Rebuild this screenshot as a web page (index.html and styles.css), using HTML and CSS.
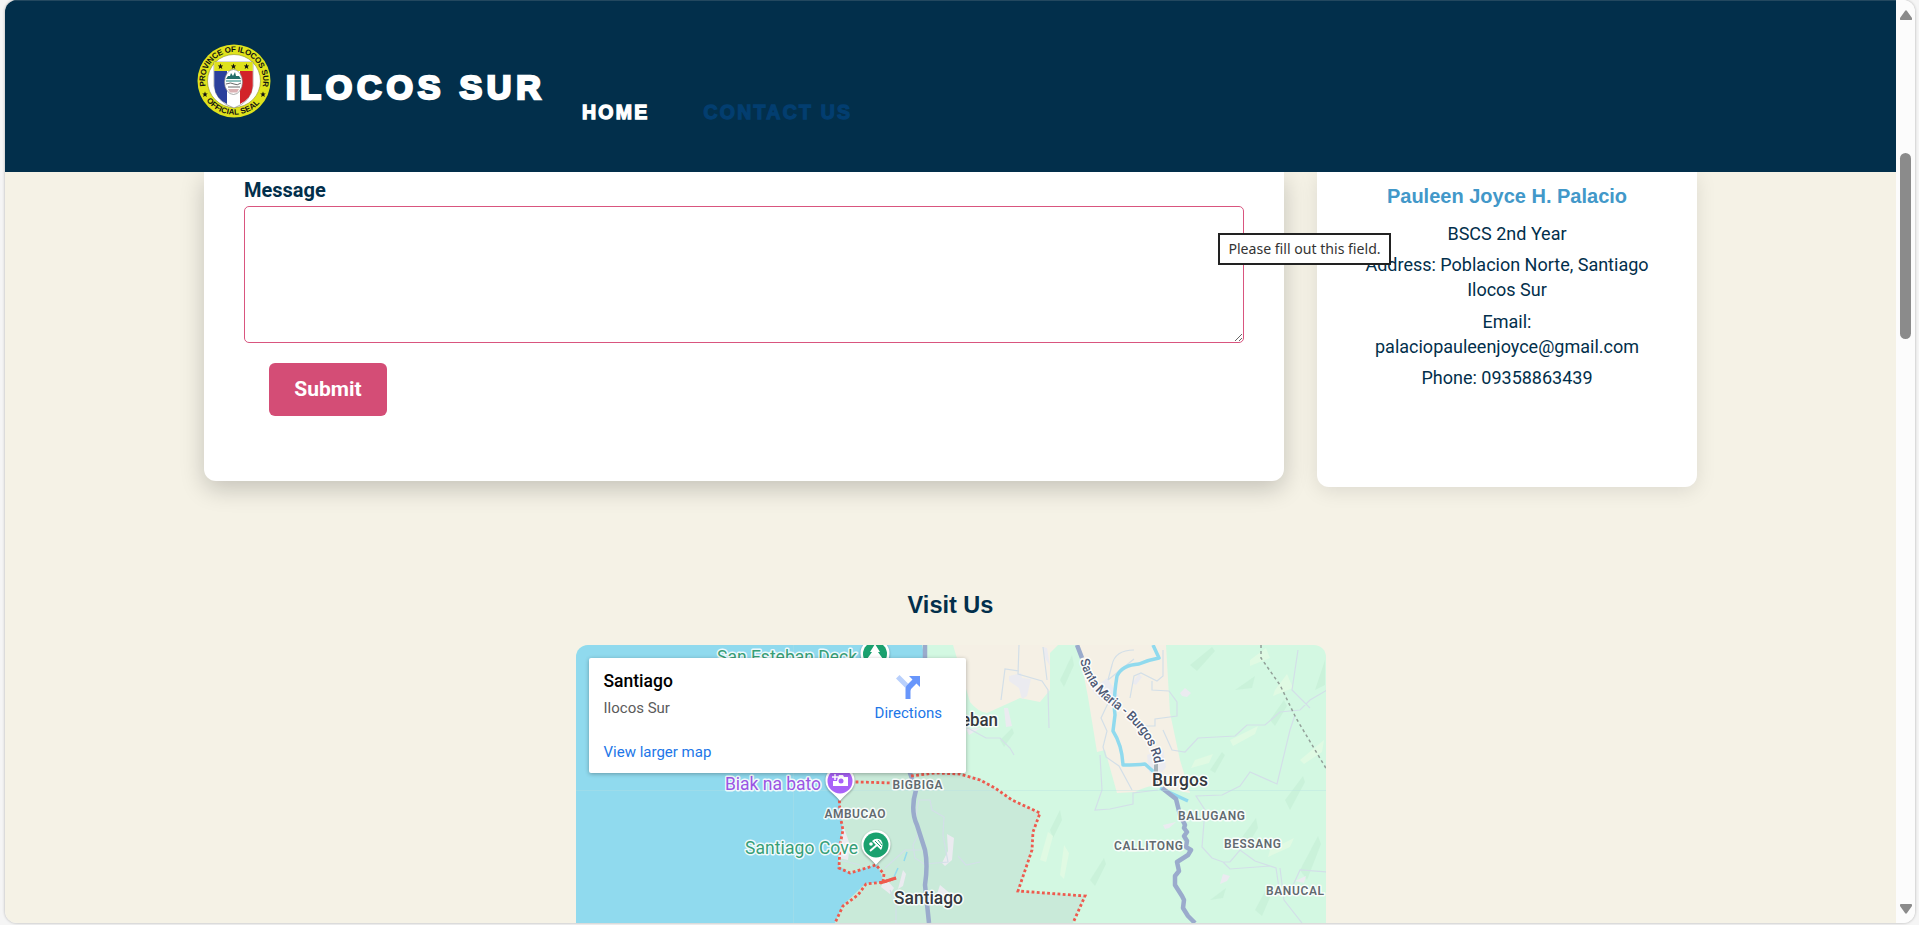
FILE: index.html
```
<!DOCTYPE html>
<html lang="en">
<head>
<meta charset="utf-8">
<title>Contact Us - Ilocos Sur</title>
<link rel="stylesheet" href="styles.css">
</head>
<body>
<div class="window">
  <div class="page">
    <header class="site-header">
      <svg class="seal" viewBox="0 0 74 74">
        <defs>
          <path id="ring-top" d="M10.200 48 A29 29 0 1 1 63.800 48"/>
          <path id="ring-bottom" d="M5.5 49.5 A34 34 0 0 0 68.5 49.5"/>
        </defs>
        <circle cx="37" cy="37" r="36.5" fill="#dfe21c"/>
        <circle cx="37" cy="37" r="26.500" fill="#fff" stroke="#8d9020" stroke-width=".6"/>
        <path d="M17 18H56V42Q54 58 37 64Q19 58 17 42Z" fill="#fff" stroke="#777" stroke-width=".6"/>
        <path d="M17.300 27H30V60Q18 54 17.300 42Z" fill="#2b409c"/>
        <path d="M43 27H55.700V42Q55 54 43 60Z" fill="#d2232a"/>
        <path d="M17.300 18H55.700V27H17.300Z" fill="#dfe21c"/>
        <ellipse cx="36.500" cy="38" rx="9" ry="12.500" fill="#fff" stroke="#888" stroke-width=".7"/>
        <path d="M29 35L31 32H33L34 29L36 32L38 28L39 32H42L44 35Z" fill="#226d6a"/>
        <path d="M29 36H44V38H29Z" fill="#8cc0bd"/>
        <path d="M29 40Q34 38 37 40T44 39M31 43H43" fill="none" stroke="#444" stroke-width=".8"/>
        <path d="M31 45H42L40 48.500H33Z" fill="#dbb1b4"/>
        <g fill="#111"><path id="star" d="M23.500 19.500l.8 2h2l-1.600 1.300.6 2.200-1.800-1.300-1.800 1.300.6-2.200-1.600-1.300h2z"/><use href="#star" x="13"/><use href="#star" x="26"/><use href="#star" x="-15.500" y="28"/><use href="#star" x="42.500" y="28"/></g>
        <text class="seal-text"><textPath href="#ring-top" startOffset="6" textLength="102">PROVINCE OF ILOCOS SUR</textPath></text>
        <text class="seal-text"><textPath href="#ring-bottom" startOffset="8" textLength="61">OFFICIAL SEAL</textPath></text>
      </svg>
      <span class="brand">ILOCOS SUR</span>
      <nav class="nav">
        <a class="nav-link">HOME</a>
        <a class="nav-link nav-link-current">CONTACT US</a>
      </nav>
    </header>
    <main class="main">
      <section class="cards">
        <form class="form-card">
          <label class="form-label" for="message">Message</label>
          <textarea class="message" id="message"></textarea>
          <button class="submit" type="button">Submit</button>
        </form>
        <aside class="person-card">
          <h3 class="person-name">Pauleen Joyce H. Palacio</h3>
          <p class="person-line">BSCS 2nd Year</p>
          <p class="person-line">Address: Poblacion Norte, Santiago Ilocos Sur</p>
          <p class="person-line">Email: palaciopauleenjoyce@gmail.com</p>
          <p class="person-line">Phone: 09358863439</p>
        </aside>
      </section>
      <h2 class="visit-title">Visit Us</h2>
      <div class="map">
        <svg class="map-canvas" viewBox="576 645 751 278">
          <rect x="576" y="645" width="751" height="278" fill="#d3f8e2"/>
          <g fill="#c4efd5" opacity=".6">
            <path d="M1060 680l12-25 2 10-10 22zM1190 665l22-18 3 4-18 20zM1235 690l20-14-3 12zM1270 720l14-20 3 6-12 20zM1210 770l12-18 3 3-10 18zM1285 800l18-24 2 6-15 28zM1240 840l16-22 2 10-12 20zM1300 870l18-34 3 8-14 36zM1050 830l10-20 2 10-9 18zM1090 880l14-22 2 6-11 22zM1210 900l16-12-3 10zM1255 910l14-26 5 4-12 28zM1000 740l12-12 2 5-10 14zM1315 690l10-30v25z"/>
          </g>
          <g fill="#e0fae3">
            <path d="M1250 660l16-12 4 10-20 8zM1275 690l12-16 6 14-20 8zM1195 760l18-6-4 9-18 5zM1230 740l28-14-3 8-22 12zM1040 860l8-28 5 4-7 26zM1060 875l4-30 5 8-5 26zM1270 850l24-12-4 9-22 10zM1300 760l24-20-2 12-18 12z"/>
          </g>
          <path d="M953 645L970 702Q978 712 987 713L1020 698L1040 702L1050 690V653L1058 645Z" fill="#f5f0e5"/>
          <path d="M1078 645L1088 697L1097 752L1105 750L1117 793L1135 792Q1150 784 1157 787L1190 793L1180 760L1170 713L1166 645Z" fill="#f5f0e5"/>
          <path d="M576 645H922L929 680L945 760L850 773L840 800L843 830L838 850L839 866L850 873L877 864L884 875L884 882L865 884L855 895L843 905L835 923H576Z" fill="#90daee"/>
          <path class="town" d="M850 773L960 773L980 778L1012 800L1040 813L1033 832L1032 850L1018 891L1085 896L1073 923H835L843 905L865 884L884 882L877 864L850 873L839 866L843 830L840 800Z" fill="#c9ead9"/>
          <g fill="#ebebf0">
            <path d="M843 825l7 20-2 15-9-2zM1009 676l12-3 1 5 9 1-4 17-5 3-3-11-10-7zM1004 708h4l4 18-6 1zM966 729l15-1-12 7zM1132 683l7-9 3 3-6 8zM1180 693l5-5 6 5-4 4-5-1zM1163 825l13-3-7 6-4 1zM1220 884l3-10 7 2-3 5zM1295 881l11-5-2 7zM947 834l7 4-2 22-7 6-3-3 6-12zM903 870l3 4-3 12-5 3zM940 885l12 10-3 9-12-10zM885 878l9 10-4 6-9-7zM1043 647l4 1 3 18-5-8zM1092 690l15-12 12 18-12 6-7-3zM1147 755l16-6 3 18-9 12-8-7z"/>
          </g>
          <g class="minor-roads">
            <path d="M1019 645L1018 674L1042 681L1048 690L1049 728M1001 700L1005 669L1019 671M1043 647L1047 680M966 727L986 738L1000 738L1010 748L1014 755M1110 699L1101 718L1107 731L1103 747L1106 757L1119 766L1132 790M1134 659L1108 680M1134 650Q1115 650 1112 665L1108 680M1130 698L1134 676L1141 673L1157 681L1163 676V650M1152 681V690L1169 691L1177 702V716L1155 719V726H1141M1163 730L1172 750L1185 752L1198 738L1235 736L1247 725H1265L1280 712L1300 710L1310 700L1327 690M1295 715L1290 730L1277 784L1250 772L1240 786L1222 795L1196 796L1205 810L1202 847L1212 858L1223 862H1230L1240 850L1255 861L1276 868L1280 895M1223 862L1230 869L1270 866M1327 872L1300 870L1290 892M1100 755L1102 790L1095 810L1110 809L1133 804V793L1158 790M1280 868L1284 900L1302 923M1298 650L1292 690L1310 708"/>
            <path d="M919 800H930L932 810L944 817L943 835L948 862L924 864L915 858L913 845L918 835L915 820ZM922 850L905 850L885 868M890 890L896 905V923M958 856L966 865L980 862M840 860L860 865"/>
          </g>
          <path class="district" d="M1261 645V658L1280 685L1296 718L1327 770"/>
          <path class="river" d="M1153 645L1159 658Q1148 660 1139 664Q1122 665 1117 676Q1113 700 1115 715L1113 731Q1122 745 1123 765Q1137 765 1145 764L1155 773M1160 788L1188 801"/>
          <path d="M907 852l-3 9M898 868l-4 9" stroke="#90daee" stroke-width="1.500"/>
          <path class="highway" d="M925 645V665L910 773L916 790Q910 810 917 825L925 850Q928 865 925 885L929 923M1077 645L1082 658M1162 788L1176 799L1180 815L1185 825L1184 828L1187 832L1184 836L1187 841L1186 847L1191 850L1188 855L1177 862L1179 871L1175 876V885L1182 896L1184 900L1183 908L1188 916L1195 923"/>
          <path d="M1156 764V785" stroke="#a7b2b9" stroke-width="4" fill="none"/>
          <path d="M576 790.500H1327M793.500 645V923" stroke="#b6dfe2" stroke-width=".6" opacity=".6"/>
          <path class="boundary" d="M839 790L840 815L843 830L840 845L839 868L850 873L876 865L884 874L883 882L896 878L884 882L866 884L858 895L843 906L835 923M840 782H860L892 783M911 776L935 773L960 774L980 780L995 788L1012 800L1040 813L1033 832L1032 850L1018 891L1085 896L1073 923"/>
          <path d="M880 883L896 878" stroke="#ee5a4e" stroke-width="3"/>
          <g class="poi-label">
            <text x="717" y="662.500" textLength="140" fill="#379f77">San Esteban Deck</text>
            <text x="725" y="789.500" textLength="96" fill="#9b55e3">Biak na bato</text>
            <text x="745" y="854" textLength="113" fill="#379f77">Santiago Cove</text>
          </g>
          <g class="pins">
            <g transform="translate(875 654)"><path class="pin-base" d="M0 20Q-3 16-10 10A14.500 14.500 0 1 1 10 10Q3 16 0 20Z"/><circle r="12" fill="#1aa16f"/><path d="M0-10L-5-2H-3L-8 5H8L3-2H5Z" fill="#fff"/></g>
            <g transform="translate(840 781)"><path class="pin-base" d="M0 20Q-3 16-10 10A14.500 14.500 0 1 1 10 10Q3 16 0 20Z"/><circle r="12.500" fill="#a962f8"/><path d="M-2-4L-1-6H3L4-4H8V5H-7V0H-3Z" fill="#fff"/><circle cx="1" r="2.500" fill="#a962f8"/><path d="M-5-7v6M-8-4h6" stroke="#fff" stroke-width="1.500" fill="none"/></g>
            <g transform="translate(876 845)"><path class="pin-base" d="M0 20Q-3 16-10 10A14.500 14.500 0 1 1 10 10Q3 16 0 20Z"/><circle r="12.500" fill="#1aa16f"/><path d="M-4-4Q0-8 5-5Q8 0 5 5Z" fill="#fff"/><path d="M-1-4L5 2M2-5L6 0" fill="none" stroke="#1aa16f" stroke-width="1"/><path d="M1 0L-6 6" stroke="#fff" stroke-width="2"/><circle cx="-5" cy="-1" r="1.800" fill="#fff"/></g>
          </g>
          <g class="city-label">
            <text x="937" y="726" textLength="61" lengthAdjust="spacingAndGlyphs">Esteban</text>
            <text x="894" y="904" textLength="69">Santiago</text>
            <text x="1152" y="786" textLength="56">Burgos</text>
          </g>
          <g class="village-label">
            <text x="892.500" y="788.500" textLength="51">BIGBIGA</text>
            <text x="824.500" y="818" textLength="62">AMBUCAO</text>
            <text x="1178" y="820" textLength="68">BALUGANG</text>
            <text x="1114" y="849.500" textLength="70">CALLITONG</text>
            <text x="1224" y="847.500" textLength="58">BESSANG</text>
            <text x="1266" y="895" textLength="59">BANUCAL</text>
          </g>
          <path id="road-line" d="M1080 660C1086 684 1098 696 1118 710C1136 725 1152 741 1155 768" fill="none"/>
          <text class="road-label"><textPath href="#road-line" textLength="131">Santa Maria - Burgos Rd</textPath></text>
        </svg>
        <div class="place-card">
          <div class="place-info">
            <div class="place-name">Santiago</div>
            <div class="place-region">Ilocos Sur</div>
            <a class="place-link">View larger map</a>
          </div>
          <div class="place-directions">
            <svg class="directions-icon" viewBox="0 0 24 24"><path d="M0 3.500L3.500 0L12 8.500L9.500 13Z" fill="#b9d0fc"/><path d="M9.500 24V13.500Q9.500 11.500 11 10L16.500 4.500L13 1H24V12L20.500 8.500L15.500 13.500Q14.500 14.500 14.500 16V24Z" fill="#6896fb"/></svg>
            <a class="directions-link">Directions</a>
          </div>
        </div>
      </div>
    </main>
  </div>
  <div class="scrollbar">
    <svg class="arrow" viewBox="0 0 12 10"><path d="M5 1Q6-.5 7 1L12 8Q12.500 10 11 10H1Q-.5 10 0 8Z" fill="#8b8b8b"/></svg>
    <div class="thumb"></div>
    <svg class="arrow arrow-down" viewBox="0 0 12 10"><path d="M5 9Q6 10.500 7 9L12 2Q12.500 0 11 0H1Q-.5 0 0 2Z" fill="#8b8b8b"/></svg>
  </div>
  <div class="tooltip">Please fill out this field.</div>
</div>
</body>
</html>
```
FILE: styles.css
```
* { box-sizing: border-box; }
body {
  margin: 0;
  height: 925px;
  padding: 0 4px 2px 5px;
  background: #f5f5f5;
  font-family: Roboto, "Liberation Sans", sans-serif;
  color: #022f4b;
  overflow: hidden;
}
.window {
  position: relative;
  display: flex;
  height: 923px;
  border-radius: 12px;
  overflow: hidden;
  box-shadow: 0 0 3px rgba(0, 0, 0, .3);
  background: #fcfcfc;
}
.page {
  width: 1891px;
  height: 923px;
  background: #f5f2e6;
  overflow: hidden;
}
.site-header {
  position: relative;
  z-index: 2;
  display: flex;
  align-items: flex-start;
  height: 172px;
  padding: 43px 0 0 192px;
  background: #022f4b;
  border-top: 1px solid #23485f;
  color: #fff;
  font-family: "Liberation Sans", Arial, sans-serif;
  font-weight: 700;
}
.seal { width: 74px; height: 74px; flex: none; }
.seal-text { font: 700 8px "Liberation Sans", sans-serif; fill: #111; }
.brand {
  margin: 21px 0 0 15px;
  width: 260px;
  font-size: 34px;
  line-height: 44px;
  letter-spacing: 4.800px;
  white-space: nowrap;
  -webkit-text-stroke: 2.600px currentColor;
}
.nav { display: flex; gap: 54px; margin: 56px 0 0 36px; }
.nav-link {
  font-size: 19.5px;
  line-height: 24px;
  letter-spacing: 2.250px;
  white-space: nowrap;
  -webkit-text-stroke: 1.300px currentColor;
}
.nav-link-current { color: #033e70; }
.cards {
  display: flex;
  align-items: flex-start;
  gap: 33px;
  padding-left: 199px;
}
.form-card {
  width: 1080px;
  height: 309px;
  padding: 6px 40px 0;
  background: #fff;
  border-radius: 0 0 12px 12px;
  box-shadow: 0 8px 24px rgba(0, 0, 0, .2);
}
.form-label {
  display: block;
  height: 28px;
  font-size: 20px;
  font-weight: 700;
  line-height: 24px;
}
.message {
  display: block;
  width: 1000px;
  height: 137px;
  border: 1px solid #d9557f;
  border-radius: 5px;
  background: #fff;
  resize: vertical;
}
.submit {
  display: block;
  width: 118px;
  height: 53px;
  margin: 20px 0 0 25px;
  padding: 0 0 2px;
  border: 0;
  border-radius: 6px;
  background: #d44d76;
  color: #fff;
  font: 700 21px Roboto, sans-serif;
}
.person-card {
  width: 380px;
  height: 315px;
  padding: 10px 40px 0;
  background: #fff;
  border-radius: 0 0 12px 12px;
  box-shadow: 0 4px 20px rgba(0, 0, 0, .1);
  text-align: center;
}
.person-name {
  margin: 0 0 11px;
  color: #4298c9;
  font: 700 20px/28px "Liberation Sans", sans-serif;
  white-space: nowrap;
}
.person-line {
  margin: 0 0 6.400px;
  font-size: 18px;
  line-height: 25px;
  color: #022f4b;
}
.visit-title {
  margin: 102px 0 0;
  text-align: center;
  font: 700 23.500px/32px "Liberation Sans", sans-serif;
}
.map {
  position: relative;
  width: 750px;
  height: 278px;
  margin: 24px 0 0 571px;
  border-radius: 12px 12px 0 0;
  overflow: hidden;
}
.map-canvas { display: block; width: 751px; height: 278px; }
.minor-roads { fill: none; stroke: #d3dfe8; stroke-width: 1.200; }
.district { fill: none; stroke: #929f98; stroke-width: 1.500; stroke-dasharray: 3 3; }
.river { fill: none; stroke: #90daee; stroke-width: 3.500; stroke-linejoin: round; }
.highway { fill: none; stroke: #9aabcc; stroke-width: 4.500; stroke-linejoin: round; }
.boundary { fill: none; stroke: #ee5a4e; stroke-width: 2.800; stroke-dasharray: 2.800 2.400; }
.pin-base { fill: #fff; filter: drop-shadow(0 1px 1px rgba(0, 0, 0, .35)); }
.poi-label text, .city-label text, .village-label text, .road-label {
  stroke: #fff;
  stroke-width: 3px;
  stroke-linejoin: round;
  stroke-opacity: .85;
  paint-order: stroke;
}
.poi-label text { font-size: 17.500px; font-weight: 400; }
.city-label text { font-size: 17.500px; font-weight: 500; fill: #35393e; }
.village-label text { font-size: 12px; font-weight: 600; letter-spacing: 1px; fill: #626a70; }
.road-label { font-size: 13px; font-weight: 500; fill: #4c5874; }
.place-card {
  position: absolute;
  left: 13px;
  top: 13px;
  display: flex;
  justify-content: space-between;
  width: 377px;
  height: 115px;
  padding: 13px 24px 0 14.500px;
  background: #fff;
  border-radius: 2px;
  box-shadow: 0 1px 4px rgba(0, 0, 0, .3);
}
.place-name { color: #000; font-size: 17.500px; font-weight: 500; line-height: 20px; }
.place-region { margin: 7px 0 24px; color: #5b5b5b; font-size: 15px; line-height: 20px; }
.place-link, .directions-link { color: #2176e8; font-size: 15px; line-height: 20px; }
.place-link { display: block; }
.place-directions { display: flex; flex-direction: column; align-items: center; padding-top: 4px; }
.directions-icon { width: 24px; height: 24px; margin-bottom: 4px; }
.scrollbar {
  width: 19px;
  display: flex;
  flex-direction: column;
  align-items: center;
  padding: 10px 0 9px;
  background: #fcfcfc;
}
.arrow { width: 12px; height: 10px; }
.arrow-down { margin-top: auto; }
.thumb {
  width: 11px;
  height: 186px;
  margin-top: 133px;
  border-radius: 6px;
  background: #8b8b8b;
}
.tooltip {
  position: absolute;
  z-index: 3;
  left: 1213px;
  top: 233px;
  width: 173px;
  height: 32px;
  border: 2px solid #222;
  background: #fff;
  color: #333;
  font: 14.100px/27px "Noto Sans", sans-serif;
  text-align: center;
  white-space: nowrap;
}
```
